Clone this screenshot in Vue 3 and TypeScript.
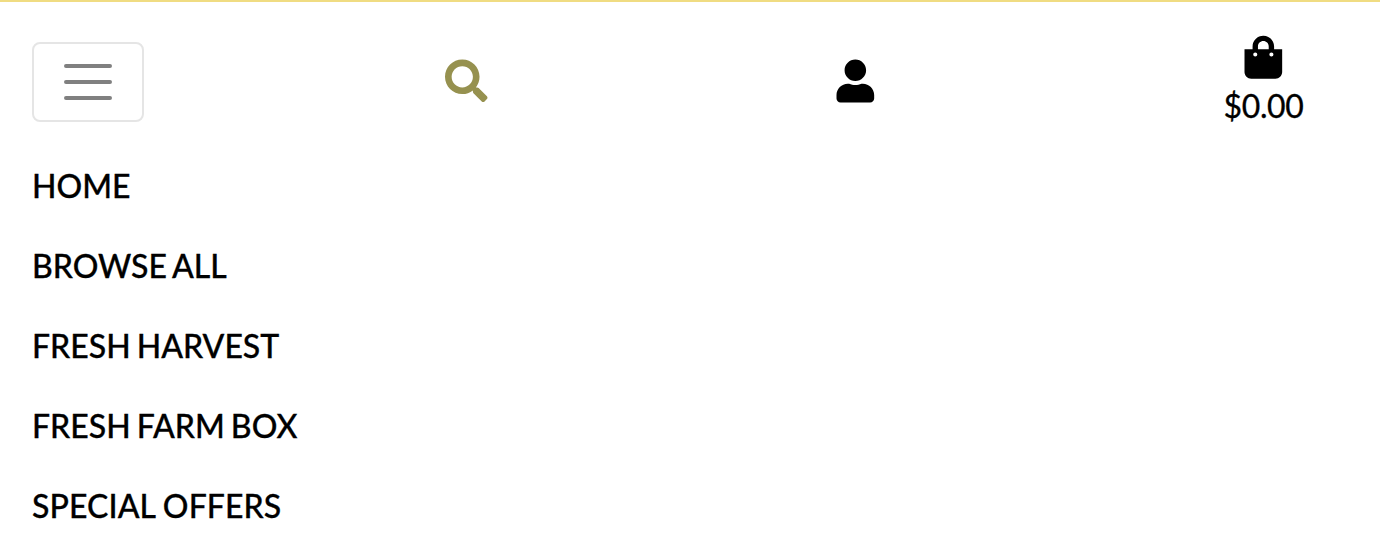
<script setup lang="ts">
interface MenuLink {
  label: string
  wide?: boolean
}

const links: MenuLink[] = [
  { label: 'HOME' },
  { label: 'BROWSE ALL' },
  { label: 'FRESH HARVEST' },
  { label: 'FRESH FARM BOX' },
  { label: 'SPECIAL OFFERS', wide: true },
]
</script>

<template>
  <header class="page">
    <div class="bar">
      <button class="toggler" aria-label="Toggle navigation">
        <svg viewBox="0 0 30 30" width="60" height="60"><path d="M4 7h22M4 15h22M4 23h22" /></svg>
      </button>
      <a class="search" aria-label="Search">
        <svg viewBox="0 -6 518 518" width="43" height="43"><path d="M505 442.7L405.3 343c-4.500-4.500-10.600-7-17-7H372c27.600-35.300 44-79.700 44-128C416 93.100 322.900 0 208 0S0 93.100 0 208s93.100 208 208 208c48.300 0 92.700-16.400 128-44v16.300c0 6.400 2.500 12.500 7 17l99.700 99.700c9.400 9.400 24.600 9.400 33.900 0l28.300-28.300c9.400-9.400 9.400-24.600.1-34zM208 336c-70.700 0-128-57.200-128-128 0-70.700 57.200-128 128-128 70.700 0 128 57.200 128 128 0 70.700-57.200 128-128 128z" /></svg>
      </a>
      <a class="user" aria-label="Account">
        <svg viewBox="-6 -6 452 523" width="38" height="44"><path d="M224 256c70.700 0 128-57.300 128-128S294.700 0 224 0 96 57.300 96 128s57.300 128 128 128zm89.600 32h-16.700c-22.200 10.200-46.900 16-72.900 16s-50.600-5.800-72.900-16h-16.700C60.200 288 0 348.200 0 422.400V464c0 26.500 21.500 48 48 48h352c26.500 0 48-21.500 48-48v-41.600c0-74.200-60.200-134.400-134.400-134.400z" /></svg>
      </a>
      <a class="cart">
        <svg viewBox="-6 -8 452 523" width="38" height="44"><path d="M352 160v-32C352 57.420 294.579 0 224 0 153.420 0 96 57.420 96 128v32H0v272c0 44.183 35.817 80 80 80h288c44.183 0 80-35.817 80-80V160h-96zm-192-32c0-35.290 28.710-64 64-64s64 28.710 64 64v32H160v-32zm160 120c-13.255 0-24-10.745-24-24s10.745-24 24-24 24 10.745 24 24-10.745 24-24 24zm-192 0c-13.255 0-24-10.745-24-24s10.745-24 24-24 24 10.745 24 24-10.745 24-24 24z" /></svg>
        <span>$0.00</span>
      </a>
    </div>
    <nav class="menu">
      <a v-for="link in links" :key="link.label" :class="{ wide: link.wide }">{{ link.label }}</a>
    </nav>
  </header>
</template>

<style>
body {
  background: #fff;
}
</style>

<style scoped>
.page {
  box-sizing: border-box;
  height: 558px;
  overflow: hidden;
  border-top: 2px solid #f0dc82;
  color: #000;
  font-family: Lato, sans-serif;
}
.bar {
  display: flex;
  align-items: flex-start;
  height: 144px;
  padding-left: 32px;
}
.toggler {
  box-sizing: border-box;
  display: flex;
  align-items: center;
  justify-content: center;
  width: 112px;
  height: 80px;
  margin: 40px 301px 0 0;
  padding: 0;
  border: 2px solid #e5e5e5;
  border-radius: 8px;
  background: transparent;
}
.toggler path {
  fill: none;
  stroke: #808080;
  stroke-width: 2;
  stroke-linecap: round;
}
svg {
  display: block;
  flex: none;
  overflow: visible;
}
.search {
  margin: 57px 348px 0 0;
  fill: #96914f;
}
.user {
  margin: 57px 349px 0 0;
}
.cart {
  display: flex;
  flex-direction: column;
  align-items: center;
  width: 80px;
  margin-top: 33px;
  font-size: 32px;
  line-height: 48px;
}
.cart span {
  margin: 3px 0 0 1px;
  letter-spacing: -0.4px;
  -webkit-text-stroke: 0.3px #000;
}
.menu {
  display: flex;
  flex-direction: column;
  align-items: flex-start;
  padding-left: 32px;
  font-size: 32px;
  font-weight: 500;
  line-height: 80px;
  word-spacing: -2px;
  white-space: nowrap;
  -webkit-text-stroke: 0.3px #000;
}
.menu .wide {
  letter-spacing: 0.1px;
  word-spacing: -0.5px;
}
</style>
